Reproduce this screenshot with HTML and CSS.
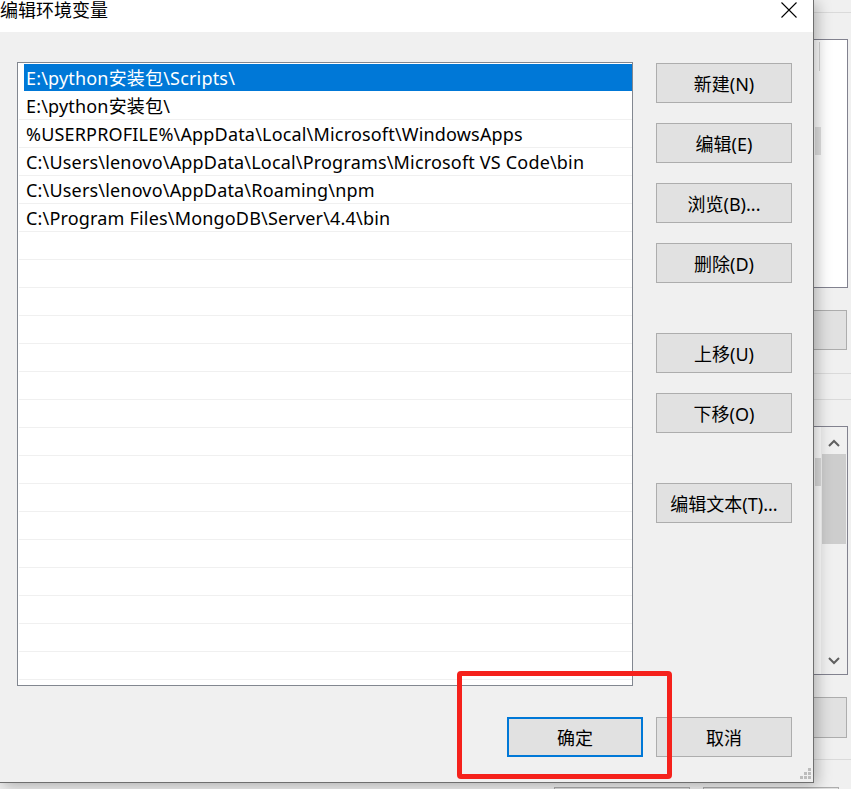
FILE: index.html
```html
<!DOCTYPE html>
<html lang="zh-CN">
<head>
<meta charset="utf-8">
<title>编辑环境变量</title>
<link rel="stylesheet" href="styles.css">
</head>
<body>
<div class="bgwin">
  <div class="bg-line bg-line-1"></div>
  <div class="bg-box bg-box-1"><div class="bg-faint"></div><div class="bg-block"></div></div>
  <div class="bg-btn bg-btn-1"></div>
  <div class="bg-line bg-line-2"></div>
  <div class="bg-line bg-line-3"></div>
  <div class="bg-box bg-box-2">
    <div class="bg-block2"></div>
    <div class="bg-scroll">
      <svg class="chev chev-up" width="12" height="8" viewBox="0 0 12 8"><path d="M1 7 L6 2 L11 7" fill="none" stroke="#606060" stroke-width="2"/></svg>
      <div class="bg-thumb"></div>
      <svg class="chev chev-down" width="12" height="8" viewBox="0 0 12 8"><path d="M1 1 L6 6 L11 1" fill="none" stroke="#606060" stroke-width="2"/></svg>
    </div>
  </div>
  <div class="bg-btn bg-btn-2"></div>
  <div class="bg-line bg-line-4"></div>
  <div class="bg-btn bg-btn-3"></div>
  <div class="bg-btn bg-btn-4"></div>
</div>

<div class="dialog">
  <div class="titlebar">
    <span class="title">编辑环境变量</span>
    <svg class="close" width="16" height="16" viewBox="0 0 16 16"><path d="M0.5 0.5 L15.5 15.5 M15.5 0.5 L0.5 15.5" stroke="#000" stroke-width="1.1" fill="none"/></svg>
  </div>
  <div class="body">
    <div class="list">
      <div class="row sel"><span class="cell">E:\python安装包\Scripts\</span></div>
      <div class="row"><span class="cell">E:\python安装包\</span></div>
      <div class="row"><span class="cell">%USERPROFILE%\AppData\Local\Microsoft\WindowsApps</span></div>
      <div class="row"><span class="cell">C:\Users\lenovo\AppData\Local\Programs\Microsoft VS Code\bin</span></div>
      <div class="row"><span class="cell">C:\Users\lenovo\AppData\Roaming\npm</span></div>
      <div class="row"><span class="cell">C:\Program Files\MongoDB\Server\4.4\bin</span></div>
      <div class="row"><span class="cell"></span></div>
      <div class="row"><span class="cell"></span></div>
      <div class="row"><span class="cell"></span></div>
      <div class="row"><span class="cell"></span></div>
      <div class="row"><span class="cell"></span></div>
      <div class="row"><span class="cell"></span></div>
      <div class="row"><span class="cell"></span></div>
      <div class="row"><span class="cell"></span></div>
      <div class="row"><span class="cell"></span></div>
      <div class="row"><span class="cell"></span></div>
      <div class="row"><span class="cell"></span></div>
      <div class="row"><span class="cell"></span></div>
      <div class="row"><span class="cell"></span></div>
      <div class="row"><span class="cell"></span></div>
      <div class="row"><span class="cell"></span></div>
      <div class="row"><span class="cell"></span></div>
      <div class="row"><span class="cell"></span></div>
      <div class="row"><span class="cell"></span></div>
    </div>
    <div class="side">
      <button class="btn">新建(N)</button>
      <button class="btn">编辑(E)</button>
      <button class="btn">浏览(B)...</button>
      <button class="btn">删除(D)</button>
      <button class="btn gap-lg">上移(U)</button>
      <button class="btn">下移(O)</button>
      <button class="btn gap-lg">编辑文本(T)...</button>
    </div>
  </div>
  <div class="footer">
    <button class="btn primary">确定</button>
    <button class="btn">取消</button>
  </div>
  <svg class="grip" width="12" height="12" viewBox="0 0 12 12">
    <rect x="8" y="0" width="3" height="3" fill="#bcbcbc"/>
    <rect x="4" y="4" width="3" height="3" fill="#bcbcbc"/>
    <rect x="8" y="4" width="3" height="3" fill="#bcbcbc"/>
    <rect x="0" y="8" width="3" height="3" fill="#bcbcbc"/>
    <rect x="4" y="8" width="3" height="3" fill="#bcbcbc"/>
    <rect x="8" y="8" width="3" height="3" fill="#bcbcbc"/>
  </svg>
</div>

<div class="mark"></div>
</body>
</html>
```
FILE: styles.css
```css
* { box-sizing: border-box; }
html, body {
  margin: 0;
  padding: 0;
  width: 851px;
  height: 789px;
  overflow: hidden;
  background: #f0f0f0;
  font-family: "Noto Sans", "Noto Sans CJK SC", sans-serif;
  font-size: 18px;
  color: #000;
}

/* background window (behind the dialog) */
.bgwin { position: absolute; inset: 0; background: #f0f0f0; }
.bg-line { position: absolute; left: 700px; right: 0; height: 1px; background: #dadada; }
.bg-line-1 { top: 12px; }
.bg-line-2 { top: 373px; }
.bg-line-3 { top: 399px; }
.bg-line-4 { top: 759px; }
.bg-box { position: absolute; left: 700px; width: 148px; background: #fff; border: 1px solid #82828f; }
.bg-box-1 { top: 39px; height: 249px; }
.bg-box-2 { top: 426px; height: 249px; }
.bg-faint { position: absolute; left: 118px; top: 2px; width: 1px; height: 29px; background: #d6d6d6; }
.bg-block { position: absolute; left: 114px; top: 87px; width: 6px; height: 28px; background: #e2e2e2; }
.bg-block2 { position: absolute; left: 114px; top: 31px; width: 6px; height: 28px; background: #dcdcdc; }
.bg-scroll { position: absolute; right: 0; top: 0; bottom: 0; width: 26px; background: #f0f0f0; }
.bg-thumb { position: absolute; left: 1px; right: 1px; top: 27px; height: 90px; background: #cdcdcd; }
.chev { position: absolute; left: 7px; }
.chev-up { top: 12px; }
.chev-down { bottom: 9px; }
.bg-btn { position: absolute; background: #e1e1e1; border: 1px solid #adadad; }
.bg-btn-1 { left: 700px; width: 147px; top: 310px; height: 40px; }
.bg-btn-2 { left: 700px; width: 147px; top: 697px; height: 41px; }
.bg-btn-3 { left: 554px; width: 136px; top: 787px; height: 40px; }
.bg-btn-4 { left: 703px; width: 136px; top: 787px; height: 40px; }

/* dialog */
.dialog {
  position: absolute;
  left: 0;
  top: 0;
  width: 814px;
  height: 783px;
  background: #f0f0f0;
  border-right: 1px solid #6f6f6f;
  border-bottom: 1px solid #6f6f6f;
  box-shadow: 3px 3px 14px rgba(0, 0, 0, 0.28);
}
.titlebar {
  height: 32px;
  background: #fff;
  display: flex;
  align-items: flex-start;
  justify-content: space-between;
  padding-right: 16px;
}
.title {
  font-size: 18px;
  line-height: 20px;
  white-space: nowrap;
}
.close { margin-top: 2px; }

.body {
  display: flex;
  gap: 23px;
  padding: 30px 0 0 17px;
}
.list {
  width: 616px;
  height: 624px;
  background: #fff;
  border: 1px solid #828790;
  overflow: hidden;
  padding: 1px 0 0 1px;
}
.row {
  display: flex;
  height: 28px;
  border-bottom: 1px solid #f0f0f0;
}
.cell {
  flex: 1;
  margin-left: 5px;
  padding: 1px 0 0 2px;
  line-height: 27px;
  letter-spacing: 0.18px;
  white-space: nowrap;
  overflow: hidden;
}
.row.sel { border-bottom-color: #fff; }
.row.sel .cell { background: #0078d7; color: #fff; }

.side {
  display: flex;
  flex-direction: column;
  gap: 20px;
  padding-top: 1px;
}
.btn {
  width: 136px;
  height: 40px;
  background: #e1e1e1;
  border: 1px solid #adadad;
  font-family: inherit;
  font-size: 18px;
  color: #000;
  padding: 0;
  margin: 0;
  border-radius: 0;
}
.gap-lg { margin-top: 30px; }

.footer {
  display: flex;
  justify-content: flex-end;
  gap: 13px;
  padding-right: 21px;
  margin-top: 31px;
}
.btn.primary { border: 2px solid #0078d7; }

.grip { position: absolute; right: 1px; bottom: 2px; }

/* annotation */
.mark {
  position: absolute;
  left: 457px;
  top: 671px;
  width: 215px;
  height: 108px;
  border: 5px solid #f5211b;
  border-radius: 4px;
}
```
